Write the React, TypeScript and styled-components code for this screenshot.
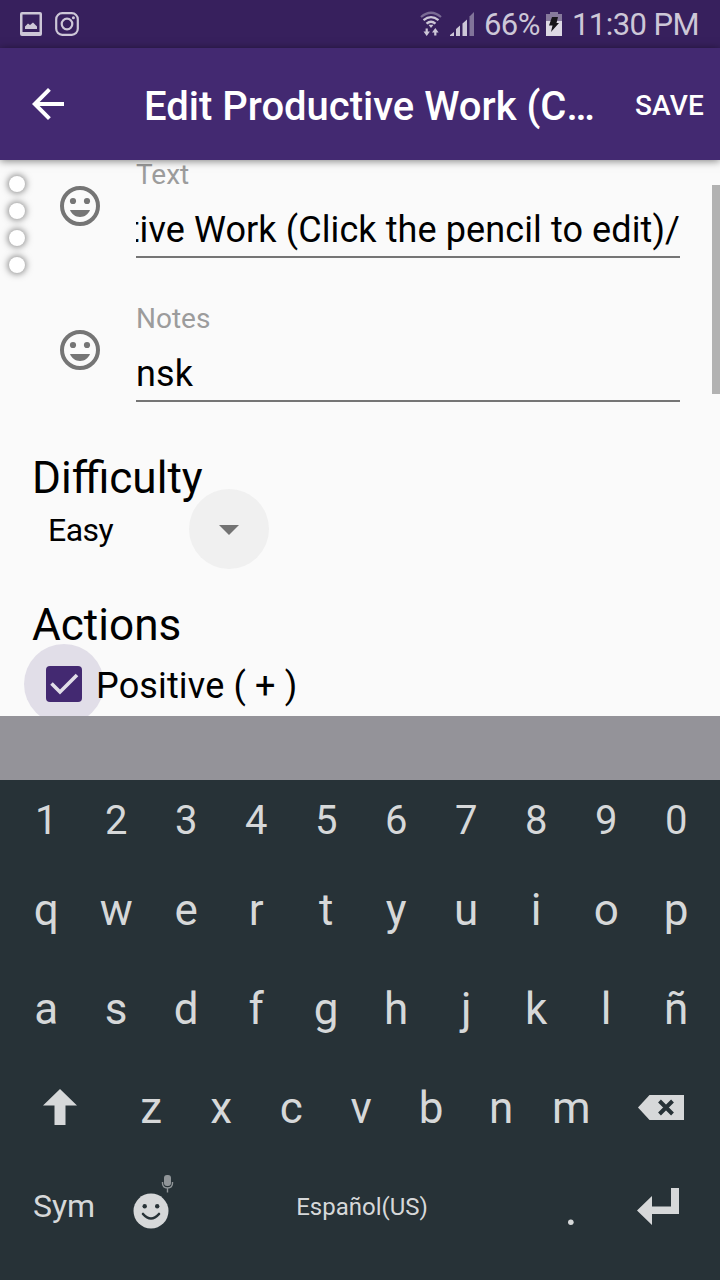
import React from 'react';
import styled, { createGlobalStyle } from 'styled-components';

const GlobalStyle = createGlobalStyle`
  *, *::before, *::after { box-sizing: border-box; }
  body { margin: 0; background: #fafafa; }
`;

const Screen = styled.div`
  display: flex;
  flex-direction: column;
  width: 720px;
  height: 1280px;
  overflow: hidden;
  font-family: Roboto, sans-serif;
  color: #000;
  background: #fafafa;
`;

const StatusBar = styled.div`
  display: flex;
  align-items: center;
  flex: 0 0 48px;
  padding: 0 20px;
  background: #37205d;
  color: #cdc7d7;
  font-size: 31px;
  letter-spacing: -0.55px;
  line-height: 40px;
  white-space: nowrap;
`;

const StatusIcon = styled.svg<{ $gap: number }>`
  display: block;
  flex: none;
  margin-right: ${({ $gap }) => $gap}px;
`;

const StatusText = styled.span<{ $width: number; $gap?: number }>`
  flex: 0 0 ${({ $width }) => $width}px;
  min-width: 0;
  margin-right: ${({ $gap = 0 }) => $gap}px;
  padding-top: 2px;
`;

const Spacer = styled.div`
  flex: 1;
`;

const AppBar = styled.header`
  display: flex;
  align-items: center;
  flex: 0 0 112px;
  padding: 0 16px 0 24px;
  background: #432971;
  color: #fff;
  box-shadow: 0 1px 8px rgba(0, 0, 0, 0.5);
  z-index: 1;
`;

const BackButton = styled.button`
  display: flex;
  width: 48px;
  height: 48px;
  padding: 0;
  border: 0;
  background: none;
  color: inherit;
`;

const Title = styled.h1`
  flex: 0 0 456px;
  margin: 0 0 0 72px;
  padding-top: 6px;
  font-size: 40px;
  font-weight: 500;
  line-height: 48px;
  white-space: nowrap;
`;

const SaveButton = styled.button`
  margin-left: auto;
  padding: 3px 0 0;
  border: 0;
  background: none;
  color: inherit;
  font: 500 28px/32px Roboto, sans-serif;
  letter-spacing: 0.2px;
`;

const Content = styled.main`
  display: flex;
  flex: 0 0 556px;
  overflow: hidden;
`;

const Dots = styled.div`
  display: flex;
  flex-direction: column;
  gap: 11px;
  flex: 0 0 32px;
  padding: 16px 0 0 9px;
`;

const Dot = styled.span`
  width: 16px;
  height: 16px;
  border-radius: 50%;
  background: #fff;
  box-shadow: 0 0 7px 1px rgba(0, 0, 0, 0.5);
`;

const Form = styled.form`
  flex: 0 0 648px;
`;

const Field = styled.div`
  display: flex;
  height: 144px;
`;

const EmojiButton = styled.span`
  flex: 0 0 80px;
  margin: 22px 0 0 24px;
  color: #757575;
`;

const FieldBody = styled.label`
  display: flex;
  flex-direction: column;
  flex: 0 0 544px;
  min-width: 0;
`;

const FieldLabel = styled.span`
  height: 30px;
  color: #9c9c9c;
  font-size: 28px;
  line-height: 30px;
`;

const FieldValue = styled.span<{ $end?: boolean }>`
  display: flex;
  justify-content: ${({ $end }) => ($end ? 'flex-end' : 'flex-start')};
  height: 50px;
  margin-top: 18px;
  border-bottom: 2px solid #757575;
  overflow: hidden;
  font-size: 36px;
  letter-spacing: 0.1px;
  line-height: 44px;
  white-space: nowrap;
`;

const SectionTitle = styled.h2<{ $top: number }>`
  margin: ${({ $top }) => $top}px 0 0;
  font-size: 44.1px;
  font-weight: 400;
  line-height: 52px;
`;

const Select = styled.div`
  display: flex;
  align-items: center;
  height: 80px;
  margin-top: -15px;
  padding-left: 16px;
  font-size: 32px;
  line-height: 40px;
`;

const SelectValue = styled.span`
  flex: 0 0 141px;
  padding-top: 2px;
  letter-spacing: -0.5px;
`;

const SelectArrow = styled.span`
  display: flex;
  align-items: center;
  justify-content: center;
  width: 80px;
  height: 80px;
  padding-top: 2px;
  border-radius: 50%;
  background: #f0f0f0;
`;

const CheckRow = styled.label`
  display: flex;
  align-items: center;
  height: 80px;
  margin: -7px 0 0 -8px;
  font-size: 36px;
  letter-spacing: 0.15px;
  line-height: 42px;
`;

const Ripple = styled.span`
  display: flex;
  align-items: center;
  justify-content: center;
  flex: 0 0 80px;
  height: 80px;
  margin-right: -8px;
  border-radius: 50%;
  background: #e1dee8;
`;

const CheckLabel = styled.span`
  padding-top: 3px;
`;

const Scrollbar = styled.div`
  width: 8px;
  height: 209px;
  margin: 25px 0 0 auto;
  background: #b2b2b2;
`;

const Shade = styled.div`
  flex: 0 0 64px;
  background: #949399;
`;

const Keyboard = styled.section`
  flex: 0 0 500px;
  background: #273237;
  color: #d6d8d9;
`;

const KeyRow = styled.div<{ $height: number; $size: number; $inset?: number }>`
  display: flex;
  height: ${({ $height }) => $height}px;
  padding-left: ${({ $inset = 11.2 }) => $inset}px;
  font-size: ${({ $size }) => $size}px;
`;

const Key = styled.span<{ $width?: number; $size?: number; $lift?: number }>`
  display: flex;
  align-items: center;
  justify-content: center;
  flex: 0 0 ${({ $width = 70 }) => $width}px;
  padding-bottom: ${({ $lift = 0 }) => $lift * 2}px;
  line-height: 1.2;
  ${({ $size }) => $size && `font-size: ${$size}px;`}
`;

const Emoji = () => (
  <svg width="48" height="48" viewBox="0 0 48 48" fill="currentColor" display="block">
    <circle cx="24" cy="24" r="18" fill="none" stroke="currentColor" strokeWidth="4" />
    <circle cx="17" cy="19" r="3.1" />
    <circle cx="31" cy="19" r="3.1" />
    <path d="M14 28h20c-1.6 4.2-5.4 7-10 7s-8.400-2.800-10-7z" />
  </svg>
);

const letterRows = ['qwertyuiop', 'asdfghjklñ'];

export default function App() {
  return (
    <Screen>
      <GlobalStyle />
      <StatusBar>
        <StatusIcon $gap={13} width="22" height="24" viewBox="0 0 22 24">
          <path fillRule="evenodd" fill="currentColor" d="M2 0h18q2 0 2 2v20q0 2-2 2H2q-2 0-2-2V2Q0 0 2 0zM2.500 2.500v17.500h17v-17.500zM5 17v-2.500l3-3 2 1.500 3-2.500 4 4v2.500z" />
        </StatusIcon>
        <StatusIcon $gap={0} width="24" height="24" viewBox="0 0 24 24" fill="none" stroke="currentColor">
          <rect x="1.200" y="1.200" width="21.600" height="21.600" rx="6" strokeWidth="2.200" />
          <circle cx="12" cy="12" r="5.300" strokeWidth="2.200" />
          <circle cx="18.400" cy="5.800" r="1.500" fill="currentColor" stroke="none" />
        </StatusIcon>
        <Spacer />
        <StatusIcon $gap={8} width="22" height="26" viewBox="0 0 22 26" fill="none" stroke="currentColor" strokeWidth="2.200">
          <path d="M1 6Q11-2.500 21 6" opacity=".45" />
          <path d="M3.500 9.200Q11 3 18.500 9.200M6.500 12.700Q11 8.800 15.500 12.700" />
          <path d="M8.500 13.800h5L11 17z" fill="currentColor" stroke="none" />
          <path d="M6.700 17.500v4.500M15.300 24.500v-4.500" />
          <path d="M3.500 20.500h6.400l-3.200 4.500zM12 21.500h6.600l-3.300-4.500z" fill="currentColor" stroke="none" />
        </StatusIcon>
        <StatusIcon $gap={10} width="24" height="24" viewBox="0 0 24 24" fill="currentColor">
          <path d="M0 24v-1l4-3v4zM6 24v-7l4-3.500V24zM12.500 24V11.500l4.500-4V24z" />
          <path d="M19.500 24V4.500L24 0v24z" opacity=".5" />
        </StatusIcon>
        <StatusText $width={55} $gap={7}>66%</StatusText>
        <StatusIcon $gap={10} width="16" height="24" viewBox="0 0 16 24">
          <path d="M0 2h4V0h8v2h4v8H0z" fill="#877a9c" />
          <path d="M0 9h16v15H0z" fill="#ddd9e4" />
          <path d="M6 5h6l-1.500 6H13L5 20l1.500-6.500H3z" fill="#17151a" />
        </StatusIcon>
        <StatusText $width={128}>11:30 PM</StatusText>
      </StatusBar>

      <AppBar>
        <BackButton aria-label="Back">
          <svg width="48" height="48" viewBox="0 0 24 24" fill="currentColor">
            <path d="M20 11H7.830l5.590-5.590L12 4l-8 8 8 8 1.410-1.410L7.830 13H20v-2z" />
          </svg>
        </BackButton>
        <Title>Edit Productive Work (C…</Title>
        <SaveButton>SAVE</SaveButton>
      </AppBar>

      <Content>
        <Dots>
          <Dot /><Dot /><Dot /><Dot />
        </Dots>
        <Form>
          <Field>
            <EmojiButton><Emoji /></EmojiButton>
            <FieldBody>
              <FieldLabel>Text</FieldLabel>
              <FieldValue $end>tive Work (Click the pencil to edit)/</FieldValue>
            </FieldBody>
          </Field>
          <Field>
            <EmojiButton><Emoji /></EmojiButton>
            <FieldBody>
              <FieldLabel>Notes</FieldLabel>
              <FieldValue>nsk</FieldValue>
            </FieldBody>
          </Field>
          <SectionTitle $top={4}>Difficulty</SectionTitle>
          <Select>
            <SelectValue>Easy</SelectValue>
            <SelectArrow>
              <svg width="20" height="10" viewBox="0 0 20 10"><path d="M0 0h20L10 10z" fill="#737373" /></svg>
            </SelectArrow>
          </Select>
          <SectionTitle $top={30}>Actions</SectionTitle>
          <CheckRow>
            <Ripple>
              <svg width="36" height="36" viewBox="0 0 36 36">
                <rect width="36" height="36" rx="4" fill="#432971" />
                <path d="M5.500 17.500l8.500 8.500L31 9" fill="none" stroke="#e1dee8" strokeWidth="3.600" />
              </svg>
            </Ripple>
            <CheckLabel>Positive ( + )</CheckLabel>
          </CheckRow>
        </Form>
        <Scrollbar />
      </Content>
      <Shade />

      <Keyboard>
        <KeyRow $height={81} $size={40}>
          {[...'1234567890'].map((k) => <Key key={k}>{k}</Key>)}
        </KeyRow>
        {letterRows.map((row) => (
          <KeyRow key={row} $height={99} $size={44}>
            {[...row].map((k) => <Key key={k}>{k}</Key>)}
          </KeyRow>
        ))}
        <KeyRow $height={99} $size={44} $inset={4.2}>
          <Key $width={112} $lift={1.5}>
            <svg width="34" height="36" viewBox="0 0 34 36"><path d="M17 0l17 16.500H22.500V36h-11V16.500H0z" fill="currentColor" /></svg>
          </Key>
          {[...'zxcvbnm'].map((k) => <Key key={k}>{k}</Key>)}
          <Key $width={110} $lift={1}>
            <svg width="46" height="25" viewBox="0 0 46 25">
              <path d="M11.500 0H46v25H11.500L0 12.500z" fill="currentColor" />
              <path d="M21.500 6l13 13M34.500 6l-13 13" stroke="#273237" strokeWidth="4" />
            </svg>
          </Key>
        </KeyRow>
        <KeyRow $height={99} $size={44} $inset={11}>
          <Key $width={106} $size={32} $lift={1}>Sym</Key>
          <Key $width={73} $lift={6}>
            <svg width="42" height="56" viewBox="0 0 42 56" fill="currentColor">
              <circle cx="18" cy="37" r="17.500" />
              <circle cx="11.700" cy="32.300" r="2.200" fill="#273237" />
              <circle cx="24.200" cy="32.300" r="2.200" fill="#273237" />
              <path d="M10 40q8 9 16 0" fill="none" stroke="#273237" strokeWidth="2.600" strokeLinecap="round" />
              <g opacity=".6">
                <rect x="31" y="1" width="7" height="11" rx="3" />
                <path d="M29.500 8v1q0 5 5 5t5-5V8M34.500 14v4.500" fill="none" stroke="currentColor" strokeWidth="1.400" />
              </g>
            </svg>
          </Key>
          <Key $width={344} $size={24}>Español(US)</Key>
          <Key $width={74} $size={50}>.</Key>
          <Key $width={100} $lift={1.5}>
            <svg width="42" height="37" viewBox="0 0 42 37"><path d="M34 0h8v26H15v11L0 22.500 15 8v10.500h19z" fill="currentColor" /></svg>
          </Key>
        </KeyRow>
      </Keyboard>
    </Screen>
  );
}
